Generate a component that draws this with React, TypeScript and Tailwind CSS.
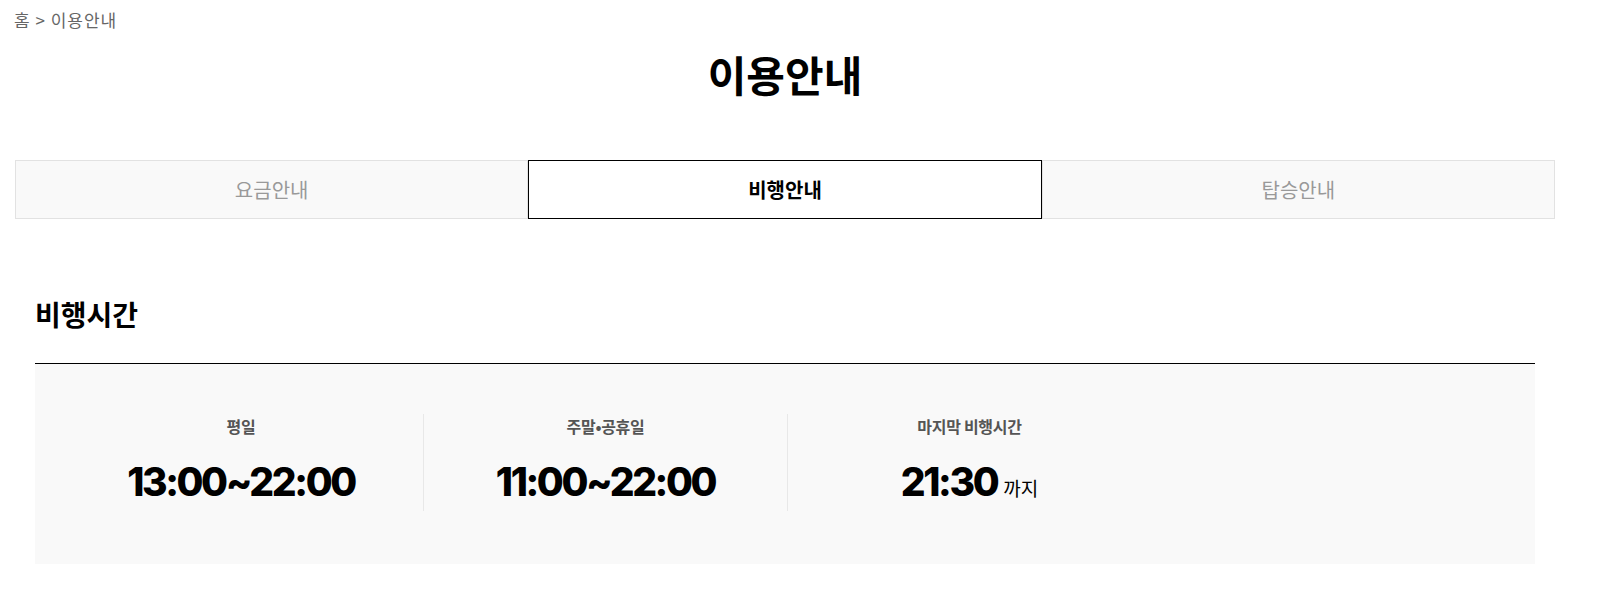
const kr = { fontFamily: '"Noto Sans CJK KR", "Noto Sans", sans-serif' };
const num = { fontFamily: 'Inter, "Noto Sans CJK KR", sans-serif' };

const tabs = [
  { label: "요금안내", active: false },
  { label: "비행안내", active: true },
  { label: "탑승안내", active: false },
];

const times = [
  { label: "평일", time: "13:00~22:00" },
  { label: "주말•공휴일", time: "11:00~22:00" },
  { label: "마지막 비행시간", time: "21:30", suffix: "까지" },
];

const App = () => {
  return (
    <div className="w-full min-h-[590px] bg-white" style={kr}>
      <div className="ml-[15px] w-[1540px]">
        {/* breadcrumb */}
        <p className="-ml-px pt-2 text-[17px] leading-6 tracking-[1px] text-[#666]">홈 &gt; 이용안내</p>

        <h1 className="mt-3 text-center text-[42px] leading-[60px] font-bold text-black">
          이용안내
        </h1>

        {/* tabs */}
        <div className="mt-14 flex">
          {tabs.map((t) =>
            t.active ? (
              <div
                key={t.label}
                className="flex h-[59px] flex-1 items-center justify-center border border-black bg-white text-[20px] font-bold text-black"
              >
                {t.label}
              </div>
            ) : (
              <div
                key={t.label}
                className="flex h-[59px] flex-1 items-center justify-center border border-[#e2e2e2] bg-[#f9f9f9] text-[20px] text-[#999]"
              >
                {t.label}
              </div>
            )
          )}
        </div>

        {/* flight time */}
        <div className="px-5">
          <h2 className="mt-[77px] text-[28px] leading-9 font-bold text-black">비행시간</h2>
          <div className="mt-[31px] flex border-t border-black bg-[#f9f9f9] px-6 pt-[50px] pb-[53px]">
            {times.map((c, i) => (
              <div
                key={c.label}
                className={`flex h-[97px] w-[364px] flex-col items-center ${i > 0 ? "border-l border-[#e8e8e8]" : ""}`}
              >
                <p className="text-[16px] leading-[24px] font-bold tracking-[-0.3px] text-[#555]">{c.label}</p>
                <p className="mt-[19px] flex items-baseline leading-[50px]">
                  <span className="text-[39px] font-extrabold tracking-[-2.4px] text-black" style={num}>
                    {c.time}
                  </span>
                  {c.suffix && <span className="ml-1.5 text-[19px] text-black">{c.suffix}</span>}
                </p>
              </div>
            ))}
          </div>
        </div>
      </div>
    </div>
  );
};

export default App;
